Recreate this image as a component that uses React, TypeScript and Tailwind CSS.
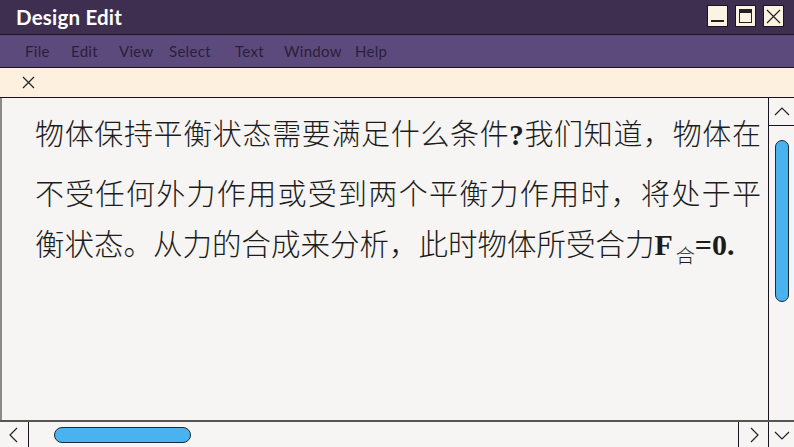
import React from "react";

const cjk = { fontFamily: '"Noto Sans CJK SC", "Noto Sans", sans-serif' };
const serif = { fontFamily: '"Liberation Serif", serif' };

function Chevron({ dir }: { dir: "up" | "down" | "left" | "right" }) {
  const d =
    dir === "up"
      ? "M2 10 L9 3 L16 10"
      : dir === "down"
      ? "M2 4 L9 11 L16 4"
      : dir === "left"
      ? "M10 2 L3 9 L10 16"
      : "M4 2 L11 9 L4 16";
  const w = dir === "up" || dir === "down" ? 18 : 14;
  const h = dir === "up" || dir === "down" ? 14 : 18;
  return (
    <svg width={w} height={h} viewBox={`0 0 ${w} ${h}`} fill="none" stroke="#222" strokeWidth="1.2">
      <path d={d} />
    </svg>
  );
}

export default function App() {
  return (
    <div className="w-[794px] h-[447px] flex flex-col overflow-hidden bg-[#f6f5f3]" style={{ fontFamily: '"Open Sans", sans-serif' }}>
      {/* Title bar */}
      <div className="h-[35px] shrink-0 bg-[#3e2f51] border-b border-[#1a1420] flex items-center justify-between pl-[16px] pr-[10px]">
        <span className="text-white font-bold text-[20.5px] tracking-[0.2px]" style={{ fontFamily: 'Lato, sans-serif' }}>Design Edit</span>
        <div className="flex gap-[7px] items-center mt-[-2px]">
          <div className="w-[21px] h-[22px] bg-[#fdf3e3] border border-[#1a1420] flex items-end justify-center pb-[4px]">
            <div className="w-[13px] h-[2px] bg-[#222]" />
          </div>
          <div className="w-[21px] h-[22px] bg-[#fdf3e3] border border-[#1a1420] flex items-center justify-center">
            <div className="w-[13px] h-[14px] border border-[#222] border-t-[4px]" />
          </div>
          <div className="w-[21px] h-[22px] bg-[#fdf3e3] border border-[#1a1420] flex items-center justify-center">
            <svg width="15" height="15" viewBox="0 0 15 15" stroke="#222" strokeWidth="1.2">
              <path d="M1 1 L14 14 M14 1 L1 14" />
            </svg>
          </div>
        </div>
      </div>
      {/* Menu bar */}
      <div className="h-[33px] shrink-0 bg-[#5d4a7c] border-b border-[#1a1420] flex items-center pl-[25px] text-[15px] text-[#2a1f3b] tracking-[0.3px]" style={{ fontFamily: 'Lato, sans-serif' }}>
        <span className="w-[46px]">File</span>
        <span className="w-[48px]">Edit</span>
        <span className="w-[50px]">View</span>
        <span className="w-[66px]">Select</span>
        <span className="w-[49px]">Text</span>
        <span className="w-[71px]">Window</span>
        <span>Help</span>
      </div>
      {/* Toolbar */}
      <div className="h-[30px] shrink-0 bg-[#fdf0df] border-b border-[#1a1420] flex items-center pl-[22px]">
        <svg width="13" height="13" viewBox="0 0 13 13" stroke="#222" strokeWidth="1.2">
          <path d="M1 1 L12 12 M12 1 L1 12" />
        </svg>
      </div>
      {/* Content */}
      <div className="flex-1 flex min-h-0">
        <div className="flex-1 border-l-2 border-[#8a8a8a] bg-[#f6f5f3] pl-[33px] pr-[7px] pt-[18px] text-[29px] leading-[32px] font-light text-[#1c1c1c] whitespace-nowrap" style={cjk}>
          <div className="text-justify [text-align-last:justify]">
            物体保持平衡状态需要满足什么条件<span className="font-bold" style={serif}>?</span>我们知道，物体在
          </div>
          <div className="mt-[25px] text-justify [text-align-last:justify]">不受任何外力作用或受到两个平衡力作用时，将处于平</div>
          <div className="mt-[18px] text-[29.5px]">
            衡状态。从力的合成来分析，此时物体所受合力
            <span className="font-bold text-[30px]" style={serif}>F</span>
            <span className="text-[19px] relative top-[8px] ml-[3px]">合</span>
            <span className="font-bold text-[30px]" style={serif}>=0.</span>
          </div>
        </div>
        <div className="w-[26px] shrink-0 border-l border-[#1a1420] flex flex-col items-center">
          <div className="w-full h-[28px] border-b border-[#1a1420] flex items-center justify-center">
            <Chevron dir="up" />
          </div>
          <div className="mt-[14px] w-[14px] h-[162px] rounded-full bg-[#4ab3ef] border border-[#1d2a38]" />
        </div>
      </div>
      {/* Bottom scrollbar row */}
      <div className="h-[27px] shrink-0 border-t-2 border-[#555] flex">
        <div className="w-[29px] border-r border-[#1a1420] flex items-center justify-center">
          <Chevron dir="left" />
        </div>
        <div className="flex-1 flex items-center pl-[25px]">
          <div className="w-[137px] h-[16px] rounded-full bg-[#4ab3ef] border border-[#1d2a38]" />
        </div>
        <div className="w-[30px] border-l border-[#1a1420] flex items-center justify-center">
          <Chevron dir="right" />
        </div>
        <div className="w-[26px] border-l border-[#1a1420] flex items-center justify-center">
          <Chevron dir="down" />
        </div>
      </div>
    </div>
  );
}
